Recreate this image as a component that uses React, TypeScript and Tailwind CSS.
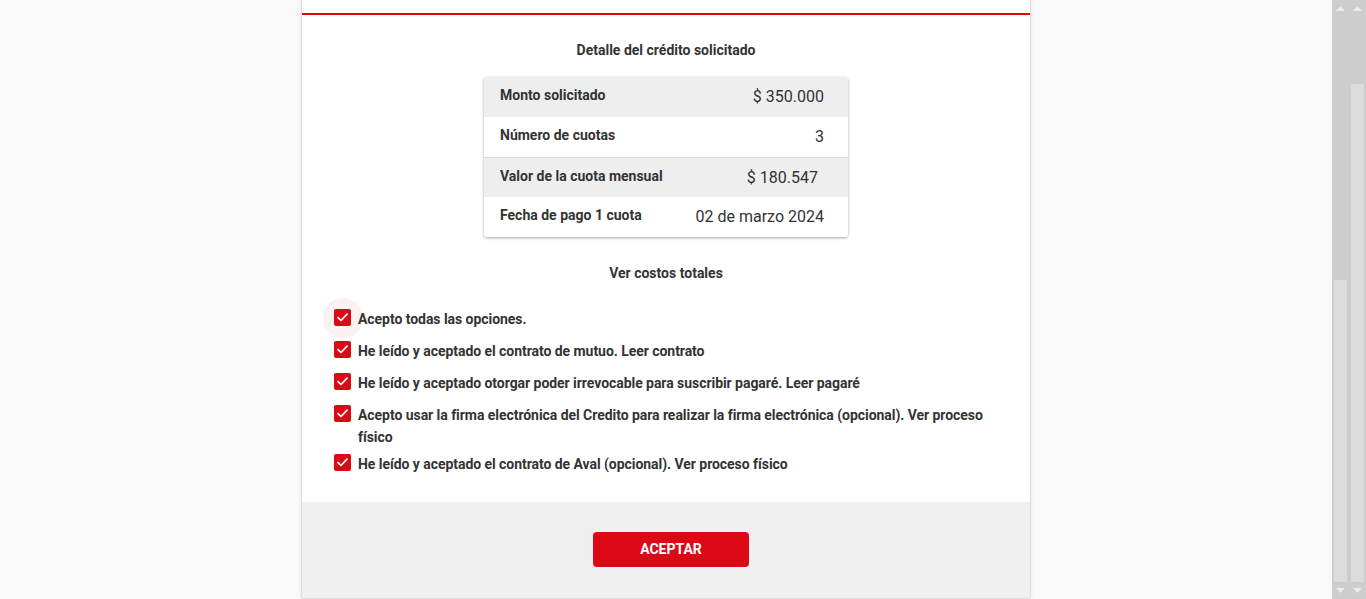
import React from "react";

const rows = [
  { label: "Monto solicitado", value: "$ 350.000", grey: true },
  { label: "Número de cuotas", value: "3", grey: false },
  { label: "Valor de la cuota mensual", value: "$ 180.547", grey: true, line: true, shift: true },
  { label: "Fecha de pago 1 cuota", value: "02 de marzo 2024", grey: false },
];

const options = [
  "Acepto todas las opciones.",
  "He leído y aceptado el contrato de mutuo. Leer contrato",
  "He leído y aceptado otorgar poder irrevocable para suscribir pagaré. Leer pagaré",
  "Acepto usar la firma electrónica del Credito para realizar la firma electrónica (opcional). Ver proceso físico",
  "He leído y aceptado el contrato de Aval (opcional). Ver proceso físico",
];

const CheckBox = ({ ripple }: { ripple?: boolean }) => (
  <span className="relative mt-[1px] flex h-[17px] w-[17px] shrink-0">
    {ripple && (
      <span className="absolute left-1/2 top-1/2 h-[40px] w-[40px] -translate-x-1/2 -translate-y-1/2 rounded-full bg-[#fcf1f2]" />
    )}
    <svg viewBox="0 0 17 17" className="relative h-[17px] w-[17px]">
      <rect x="0" y="0" width="17" height="17" rx="2" fill="#dc0816" />
      <path d="M4 8.6 L7 11.5 L13 5.2" fill="none" stroke="#fff" strokeWidth="1.7" strokeLinecap="round" strokeLinejoin="round" />
    </svg>
  </span>
);

const ScrollTrack = ({ thumbTop }: { thumbTop: number }) => (
  <div className="flex w-[17px] flex-col bg-[#cdcdcd]">
    <div className="flex h-[17px] items-center justify-center">
      <svg viewBox="0 0 9 5" className="h-[5px] w-[9px]">
        <path d="M0 5 L4.5 0 L9 5 Z" fill="#ebebeb" />
      </svg>
    </div>
    <div className="flex-1 px-[2px]" style={{ paddingTop: thumbTop }}>
      <div className="h-full bg-[#dcdcdc]" />
    </div>
    <div className="flex h-[17px] items-center justify-center">
      <svg viewBox="0 0 9 5" className="h-[5px] w-[9px]">
        <path d="M0 0 L4.5 5 L9 0 Z" fill="#ebebeb" />
      </svg>
    </div>
  </div>
);

export default function App() {
  return (
    <div className="flex h-[599px] w-full overflow-hidden bg-[#fafafa] font-['Roboto',_'Liberation_Sans',_sans-serif] text-[#333]">
      <main className="flex flex-1 justify-center">
        <div className="flex h-[599px] w-[730px] flex-col rounded-b-[3px] border-x border-b border-[#dedede] bg-white shadow-[0_1px_4px_rgba(0,0,0,0.08)]">
          <div className="h-[13px]" />
          <div className="h-[2px] bg-[#ee0000]" />

          {/* Contenido */}
          <div className="flex flex-1 flex-col items-center pt-[25px]">
            <h2 className="text-[14px] font-bold leading-[20px]">Detalle del crédito solicitado</h2>

            <div className="mt-[17px] w-[364px] overflow-hidden rounded-[3px] bg-white shadow-[0_1px_3px_rgba(0,0,0,0.35)]">
              {rows.map((r) => (
                <div
                  key={r.label}
                  className={`flex h-[40px] items-center justify-between pl-[16px] pr-[24px] ${
                    r.grey ? "bg-[#eeeeee]" : "bg-white"
                  } ${r.line ? "border-t border-[#d6d6d6]" : ""}`}
                >
                  <span className="pb-[3px] text-[14px] font-bold">{r.label}</span>
                  <span className={`text-[16px] ${r.shift ? "mr-[6px]" : ""}`}>{r.value}</span>
                </div>
              ))}
            </div>

            <p className="mt-[26px] text-[14px] font-bold leading-[20px]">Ver costos totales</p>

            <div className="mt-[25px] flex w-full flex-col gap-[10px] pl-[32px] pr-[32px]">
              {options.map((o, i) => (
                <label key={i} className={`flex items-start gap-[7px] ${i === 4 ? "-mt-[5px]" : ""}`}>
                  <CheckBox ripple={i === 0} />
                  <span className="relative text-[14px] font-bold leading-[22px] tracking-[-0.05px]">{o}</span>
                </label>
              ))}
            </div>
          </div>

          {/* Pie */}
          <div className="flex h-[96px] items-center justify-center bg-[#f0f0f0]">
            <button className="ml-[10px] mb-[1px] h-[35px] w-[156px] rounded-[4px] bg-[#dc0816] text-[14px] font-bold text-white">
              ACEPTAR
            </button>
          </div>
        </div>
      </main>

      <div className="flex w-[34px]">
        <ScrollTrack thumbTop={263} />
        <ScrollTrack thumbTop={67} />
      </div>
    </div>
  );
}
